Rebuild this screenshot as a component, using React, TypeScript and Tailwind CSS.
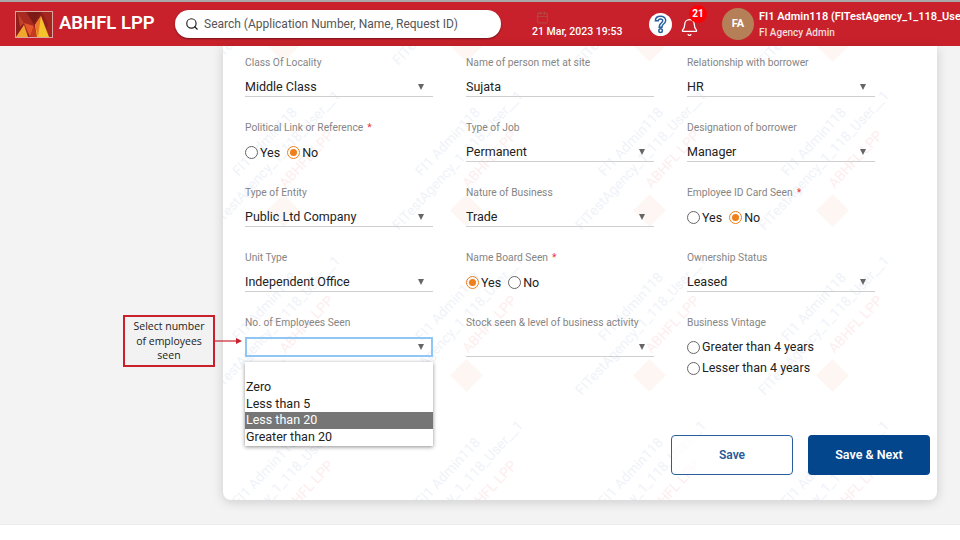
import React from "react"
import { Bell, Calendar, Search } from "lucide-react"

const BrandLogo = () => (
  <svg width="38" height="27" viewBox="0 0 38 27" className="shrink-0">
    <rect x="0.5" y="0.5" width="37" height="26" fill="#8f1f1c" stroke="#d9a7a0" />
    <polygon points="1,1 11,1 19,14 11,26 1,26 9,14" fill="#a82a20" />
    <polygon points="27,1 37,1 37,26 27,26 33,14" fill="#a5261e" />
    <polygon points="12,1 19,13 26,1" fill="#7c1a17" />
    <polygon points="1,26 9,14 13,26" fill="#f0a72c" />
    <polygon points="9,12 15,26 19,15" fill="#e4572a" />
    <polygon points="19,15 23,26 15,26" fill="#c93a22" />
    <polygon points="26,5 34,26 22,26 20,14" fill="#f5c32c" />
    <polygon points="26,5 20,14 23,26" fill="#ea7a28" />
    <polygon points="3,3 9,12 5,16" fill="#c4412a" />
  </svg>
)

const QuestionIcon = () => (
  <span className="flex h-[23px] w-[23px] items-center justify-center rounded-full bg-white">
    <svg width="13" height="19" viewBox="0 0 14 20" fill="none" stroke="#2a5f9e" strokeWidth="1.6">
      <path d="M1.5 6 C1.5 2.8 4 1 7 1 C10.2 1 12.6 3 12.6 5.8 C12.6 8 11.2 9 9.8 10 C8.8 10.8 8.6 11.3 8.6 13 L5.6 13 C5.6 10.6 6.2 9.6 7.6 8.6 C8.8 7.7 9.4 7.2 9.4 6 C9.4 4.8 8.4 4 7 4 C5.6 4 4.7 4.9 4.6 6 Z" />
      <circle cx="7.1" cy="16.6" r="1.9" />
    </svg>
  </span>
)

const Header = () => (
  <header className="flex h-[46px] shrink-0 items-center border-t-2 border-[#a9a9a9] bg-[#c8212b] pl-[15px] text-white">
    <BrandLogo />
    <span className="ml-[6px] w-[116px] shrink-0 text-[18.5px] font-semibold">ABHFL LPP</span>
    <div className="flex h-[28px] w-[326px] shrink-0 items-center rounded-full bg-white pl-[10px] shadow-[0_1px_2px_rgba(0,0,0,0.4)]">
      <Search size={14} strokeWidth={2} className="text-[#222]" />
      <span className="ml-[5px] text-[12px] text-[#555]">Search (Application Number, Name, Request ID)</span>
    </div>
    <div className="ml-[31px] flex w-[88px] shrink-0 flex-col">
      <Calendar size={13} strokeWidth={1.4} className="mb-[1px] ml-[4px] text-[#a9594c]" />
      <span className="text-[10.5px] font-medium leading-[13px] whitespace-nowrap">21 Mar, 2023 19:53</span>
    </div>
    <div className="ml-[29px] shrink-0">
      <QuestionIcon />
    </div>
    <div className="relative ml-[8px] mt-[6px] shrink-0">
      <Bell size={19} strokeWidth={1.6} />
      <span className="absolute -right-[8px] -top-[13px] flex h-[18px] w-[18px] items-center justify-center rounded-full bg-[#fb0007] text-[10px] font-bold">
        21
      </span>
    </div>
    <span className="ml-[23px] flex h-[32px] w-[32px] shrink-0 items-center justify-center rounded-full bg-[#b57f58] text-[11px] font-bold">
      FA
    </span>
    <div className="ml-[5px] flex shrink-0 flex-col whitespace-nowrap">
      <span className="text-[11px] font-semibold leading-[16px]">FI1 Admin118 (FITestAgency_1_118_User__1)</span>
      <span className="text-[10px] font-medium leading-[15px] text-[#f3dcdc]">FI Agency Admin</span>
    </div>
  </header>
)

const Caret = () => (
  <span className="h-0 w-0 border-x-[3.5px] border-t-[6px] border-x-transparent border-t-[#666]" />
)

const Label = ({ text, required }: { text: string; required?: boolean }) => (
  <div className="h-[14px] text-[10.25px] leading-[14px] text-[#858585]">
    {text}
    {required && <span className="ml-[4px] text-[#e8343f]">*</span>}
  </div>
)

const SelectField = ({ label, value }: { label: string; value: string }) => (
  <div>
    <Label text={label} />
    <div className="mt-[7px] flex h-[20px] items-center justify-between border-b border-[#cfcfcf] pr-[9px] pt-px text-[12.5px] text-[#222]">
      <span>{value}</span>
      <Caret />
    </div>
  </div>
)

const TextField = ({ label, value }: { label: string; value: string }) => (
  <div>
    <Label text={label} />
    <div className="mt-[7px] flex h-[20px] items-center border-b border-[#cfcfcf] pt-px text-[12.5px] text-[#222]">{value}</div>
  </div>
)

const Radio = ({ label, checked }: { label: string; checked?: boolean }) => (
  <span className="flex items-center gap-[2px] text-[12.5px] leading-[20px] text-[#222]">
    {checked ? (
      <span className="flex h-[13px] w-[13px] items-center justify-center rounded-full border border-[#ef7f1a]">
        <span className="h-[7px] w-[7px] rounded-full bg-[#ef7f1a]" />
      </span>
    ) : (
      <span className="h-[13px] w-[13px] rounded-full border border-[#666] bg-white" />
    )}
    {label}
  </span>
)

const RadioField = ({ label, value, required }: { label: string; value: "Yes" | "No"; required?: boolean }) => (
  <div>
    <Label text={label} required={required} />
    <div className="mt-[7px] flex h-[20px] items-center gap-[7px] pt-[1px]">
      <Radio label="Yes" checked={value === "Yes"} />
      <Radio label="No" checked={value === "No"} />
    </div>
  </div>
)

const EmployeesSelect = () => (
  <div className="relative">
    <Label text="No. of Employees Seen" />
    <div className="mt-[7px] flex h-[20px] items-center justify-end border-2 border-[#90c6f3] pr-[7px]">
      <Caret />
    </div>
    <ul className="absolute left-0 top-[46px] z-20 h-[84px] w-[188px] bg-white pt-[17px] text-[12.5px] leading-[16.5px] text-[#222] shadow-[0_1px_4px_rgba(0,0,0,0.45)]">
      <li className="pl-px">Zero</li>
      <li className="pl-px">Less than 5</li>
      <li className="bg-[#767676] pl-px text-white">Less than 20</li>
      <li className="pl-px">Greater than 20</li>
    </ul>
  </div>
)

const tileCols = [61, 244, 427, 610, 793]
const tileRows = [0, 165, 330, 495]

// one repeat of the diagonal watermark, placed from the logo centre
const Watermark = () => (
  <div className="pointer-events-none absolute inset-0 overflow-hidden">
    {tileRows.flatMap((y) =>
      tileCols.map((x) => (
        <div key={`${x}-${y}`} className="absolute h-0 w-0" style={{ left: x, top: y }}>
          <span className="absolute -left-[12px] -top-[12px] h-[23px] w-[23px] rotate-45 bg-[#fef6f2]" />
          <span className="absolute -left-[44px] -top-[47px] origin-bottom-left -rotate-[47deg] whitespace-nowrap text-[14px] leading-[14px] text-[#eff3f9]">
            FI1 Admin118
          </span>
          <span className="absolute -left-[67px] top-[7px] origin-bottom-left -rotate-[47deg] whitespace-nowrap text-[14px] leading-[14px] text-[#eff3f9]">
            FITestAgency_1_118_User__1
          </span>
          <span className="absolute left-[3px] -top-[35px] origin-bottom-left -rotate-[47deg] whitespace-nowrap text-[14px] leading-[14px] text-[#fdeeee]">
            ABHFL LPP
          </span>
        </div>
      ))
    )}
  </div>
)

const Callout = () => (
  <div className="absolute left-[123px] top-[269px] z-10 flex items-center">
    <div className="flex h-[52px] w-[92px] items-center justify-center border-2 border-[#c8212b] bg-[#f2f2f2] text-center font-['Open_Sans',sans-serif] text-[10.5px] leading-[14.5px] text-[#222]">
      <span>
        Select number
        <br />
        of employees
        <br />
        seen
      </span>
    </div>
    <svg width="28" height="8" viewBox="0 0 28 8">
      <path d="M0 4 H22" stroke="#c8212b" strokeWidth="1.2" />
      <polygon points="21,1 27,4 21,7" fill="#c8212b" />
    </svg>
  </div>
)

export default function App() {
  return (
    <div className="flex h-[540px] w-[960px] flex-col overflow-hidden bg-white font-['Roboto',sans-serif]">
      <Header />
      <main className="relative flex-1 bg-[#f3f3f3] pl-[223px]">
        <Callout />
        <section className="relative h-[454px] w-[714px] rounded-b-lg bg-white pl-[22px] pt-[10px] shadow-[0_2px_12px_rgba(0,0,0,0.16)]">
          <Watermark />
          <div className="relative grid w-[630px] grid-cols-[188px_188px_188px] gap-x-[33px] [grid-auto-rows:65px]">
            <SelectField label="Class Of Locality" value="Middle Class" />
            <TextField label="Name of person met at site" value="Sujata" />
            <SelectField label="Relationship with borrower" value="HR" />

            <RadioField label="Political Link or Reference" value="No" required />
            <SelectField label="Type of Job" value="Permanent" />
            <SelectField label="Designation of borrower" value="Manager" />

            <SelectField label="Type of Entity" value="Public Ltd Company" />
            <SelectField label="Nature of Business" value="Trade" />
            <RadioField label="Employee ID Card Seen" value="No" required />

            <SelectField label="Unit Type" value="Independent Office" />
            <RadioField label="Name Board Seen" value="Yes" required />
            <SelectField label="Ownership Status" value="Leased" />

            <EmployeesSelect />
            <SelectField label="Stock seen & level of business activity" value="" />
            <div>
              <Label text="Business Vintage" />
              <div className="mt-[7px] flex flex-col gap-px">
                <Radio label="Greater than 4 years" />
                <Radio label="Lesser than 4 years" />
              </div>
            </div>
          </div>
          <div className="relative mt-[54px] flex justify-end gap-[15px] pr-[7px]">
            <button className="h-[40px] w-[122px] rounded-[4px] border border-[#2a5f9e] bg-white/70 text-[12px] font-semibold text-[#2a5a96]">
              Save
            </button>
            <button className="h-[40px] w-[122px] rounded-[4px] bg-[#03468c] text-[12.5px] font-semibold text-white">
              Save &amp; Next
            </button>
          </div>
        </section>
      </main>
      <footer className="h-[16px] shrink-0 border-t border-[#ececec] bg-white" />
    </div>
  )
}
